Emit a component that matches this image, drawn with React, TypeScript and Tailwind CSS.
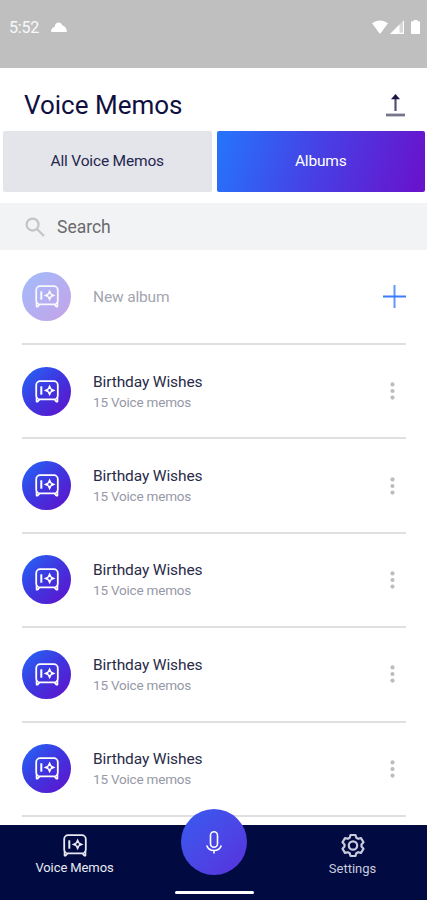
const albums = [
  { id: 1, title: "Birthday Wishes", count: 15 },
  { id: 2, title: "Birthday Wishes", count: 15 },
  { id: 3, title: "Birthday Wishes", count: 15 },
  { id: 4, title: "Birthday Wishes", count: 15 },
  { id: 5, title: "Birthday Wishes", count: 15 },
];

function VaultIcon() {
  return (
    <svg
      width="24"
      height="23"
      viewBox="0 0 24 23"
      fill="none"
      stroke="currentColor"
      strokeWidth="1.8"
      strokeLinejoin="round"
      aria-hidden="true"
    >
      <rect x="1.2" y="1.2" width="21.6" height="18.2" rx="4" />
      <path d="M1.600 17.500v4h1.200l1.700-2M22.400 17.500v4h-1.200l-1.700-2" />
      <path d="M6.300 6.300v8.400" strokeWidth="2" />
      {/* dial with a hole in the middle */}
      <path
        d="M14.600 4.500 16.500 8.500 20.500 10.400 16.500 12.300 14.600 16.300 12.700 12.300 8.700 10.400 12.700 8.500ZM14.600 9.100A1.300 1.300 0 1 0 14.600 11.700 1.300 1.300 0 1 0 14.600 9.100Z"
        fill="currentColor"
        fillRule="evenodd"
        stroke="none"
      />
    </svg>
  );
}

function StatusBar() {
  return (
    <div className="flex h-[68px] shrink-0 items-start justify-between bg-[#bfbfbf] pl-[9px] pr-[7px] pt-[18px] text-white">
      <div className="flex h-5 items-center gap-[12px]">
        <span className="text-[16px] leading-5 tracking-[-0.2px] text-white/90">5:52</span>
        <svg width="16" height="10" viewBox="0 0 16 10" fill="currentColor" className="mb-[3px]">
          <path d="M0 10C0 7 1.500 5.500 3.500 5 4 2 5.500.5 7.500.5c2 0 3.400 1.300 4 3C14 4 15.500 6 16 10Z" />
        </svg>
      </div>
      <div className="flex h-[18px] items-center">
        <svg width="16" height="14" viewBox="0 0 16 14" fill="currentColor">
          <path d="M0 3.300C4.400-.6 11.600-.6 16 3.300L8 14Z" />
        </svg>
        <svg width="14" height="14" viewBox="0 0 14 14" fill="currentColor" className="ml-[2px]">
          <path d="M14 0v14H0Z" opacity=".4" />
          <path d="M9.500 4.500V14H0ZM13 1h1v13h-1ZM9 12.800h5V14H9Z" />
        </svg>
        <svg width="9" height="14" viewBox="0 0 9 14" fill="currentColor" className="ml-[7px]">
          <path d="M2.500 0h4v1.300H8c.6 0 1 .4 1 1V13c0 .6-.4 1-1 1H1c-.6 0-1-.4-1-1V2.300c0-.6.4-1 1-1h1.500Z" />
        </svg>
      </div>
    </div>
  );
}

function Header() {
  return (
    <header className="flex h-[63px] shrink-0 items-center justify-between pl-[24px] pr-[22px] pt-[10px]">
      <h1 className="text-[26px] leading-8 text-[#10103f]">Voice Memos</h1>
      <button aria-label="Upload" className="text-[#1b1548]">
        <svg width="19" height="24" viewBox="0 0 19 24" fill="none">
          <path d="M9.500 18V3" stroke="currentColor" strokeWidth="2.200" opacity=".75" />
          <path d="M9.500 1 14 6.200H5Z" fill="currentColor" />
          <path d="M0 22h19" stroke="#75758c" strokeWidth="2.800" />
        </svg>
      </button>
    </header>
  );
}

function Tabs() {
  return (
    <div className="grid h-[61px] shrink-0 grid-cols-2 gap-[5px] pl-[3px] pr-[2px]" role="tablist">
      <button role="tab" aria-selected="false" className="rounded-[2px] bg-[#e3e5ea] text-[15.5px] tracking-[-0.18px] text-[#26264f]">
        All Voice Memos
      </button>
      <button
        role="tab"
        aria-selected="true"
        className="rounded-[2px] bg-[linear-gradient(106deg,#2575fc_0%,#4740e4_48%,#6a11cb_100%)] text-[15.5px] tracking-[-0.18px] text-white"
      >
        Albums
      </button>
    </div>
  );
}

export default function App() {
  return (
    <div className="flex h-[900px] w-full flex-col overflow-hidden bg-white font-['Roboto',sans-serif]">
      <StatusBar />
      <Header />
      <Tabs />

      {/* Search */}
      <div className="mt-[11px] flex h-[47px] shrink-0 items-center bg-[#f2f3f5] pl-[25px]">
        <svg width="20" height="20" viewBox="0 0 20 20" fill="none" stroke="#c3c4c7" strokeWidth="2.200">
          <circle cx="7.600" cy="7.600" r="6" />
          <path d="m12 12 7 7" />
        </svg>
        <span className="ml-[12px] text-[17.5px] leading-6 text-[#6a6a6c]">Search</span>
      </div>

      {/* Album list */}
      <main className="min-h-0 flex-1 overflow-hidden pl-[22px] pr-[21px]">
        <div className="flex h-[95px] items-center border-b-2 border-[#e0e0e1]">
          <div className="flex size-[49px] items-center justify-center rounded-full bg-linear-to-br from-[#9fbcfb] to-[#c5a2e8] text-white/90">
            <VaultIcon />
          </div>
          <span className="ml-[22px] text-[15.5px] leading-5 tracking-[-0.15px] text-[#a3a5b0]">New album</span>
          <button aria-label="Add album" className="ml-auto">
            <svg width="23" height="23" viewBox="0 0 23 23" fill="none" stroke="#3b7cfc" strokeWidth="2">
              <path d="M11.500 0v23" opacity=".8" />
              <path d="M0 11.500h23" />
            </svg>
          </button>
        </div>

        {albums.map((album) => (
          <div key={album.id} className="flex h-[94.4px] items-center border-b-2 border-[#e0e0e1]">
            <div className="flex size-[49px] items-center justify-center rounded-full bg-[linear-gradient(135deg,#2368f8_0%,#3f35df_50%,#6210cb_100%)] text-white">
              <VaultIcon />
            </div>
            <div className="ml-[22px] pt-px">
              <p className="text-[15.5px] leading-5 tracking-[-0.12px] text-[#292b48]">{album.title}</p>
              <p className="text-[13.5px] leading-5 tracking-[-0.2px] text-[#9698a6]">{album.count} Voice memos</p>
            </div>
            <button aria-label="More options" className="ml-auto mr-[11px]">
              <svg width="5" height="18" viewBox="0 0 5 18" fill="#bdbdbf">
                <circle cx="2.500" cy="2.400" r="2.100" />
                <circle cx="2.500" cy="9" r="2.100" />
                <circle cx="2.500" cy="15.600" r="2.100" />
              </svg>
            </button>
          </div>
        ))}
      </main>

      {/* Bottom navigation */}
      <nav className="relative flex h-[75px] shrink-0 justify-between bg-[#010b42] text-[#e8e9f1]">
        <button className="flex w-[149px] flex-col items-center pt-[9px]">
          <VaultIcon />
          <span className="mt-[2px] text-[13px] leading-[18px] tracking-[-0.1px]">Voice Memos</span>
        </button>
        <button className="flex w-[149px] flex-col items-center pt-[8px] text-[#c9cbdc]">
          <svg width="24" height="25" viewBox="0 0 24 25" fill="none" stroke="currentColor" strokeWidth="2.200" strokeLinejoin="round">
            <path d="M9.500 2h5l.8 2.700 1.900 1.100 2.800-.7 2.500 4.200-2 2.100v2.200l2 2.100-2.500 4.200-2.800-.7-1.900 1.100-.8 2.700h-5l-.8-2.700-1.900-1.100-2.800.7-2.500-4.200 2-2.100v-2.200l-2-2.100L4 5.100l2.800.7 1.900-1.100Z" />
            <circle cx="12" cy="12.500" r="4.200" />
          </svg>
          <span className="mt-[2px] text-[13px] leading-[18px]">Settings</span>
        </button>

        <button
          aria-label="Record"
          className="absolute -top-[16px] left-[181px] flex size-[66px] items-center justify-center rounded-full bg-linear-to-br from-[#345bf0] to-[#5730dc] text-white"
        >
          <svg width="18" height="25" viewBox="0 0 18 25" fill="none" stroke="currentColor" strokeWidth="1.600">
            <rect x="5.500" y="1.800" width="7" height="15.500" rx="3.500" />
            <path d="M1.700 15.500c1.100 3.200 3.900 5 7.300 5s6.200-1.800 7.300-5M9 20.500v3" />
          </svg>
        </button>
        <div className="absolute bottom-[6px] left-[175px] h-[3px] w-[79px] rounded-full bg-white" />
      </nav>
    </div>
  );
}
